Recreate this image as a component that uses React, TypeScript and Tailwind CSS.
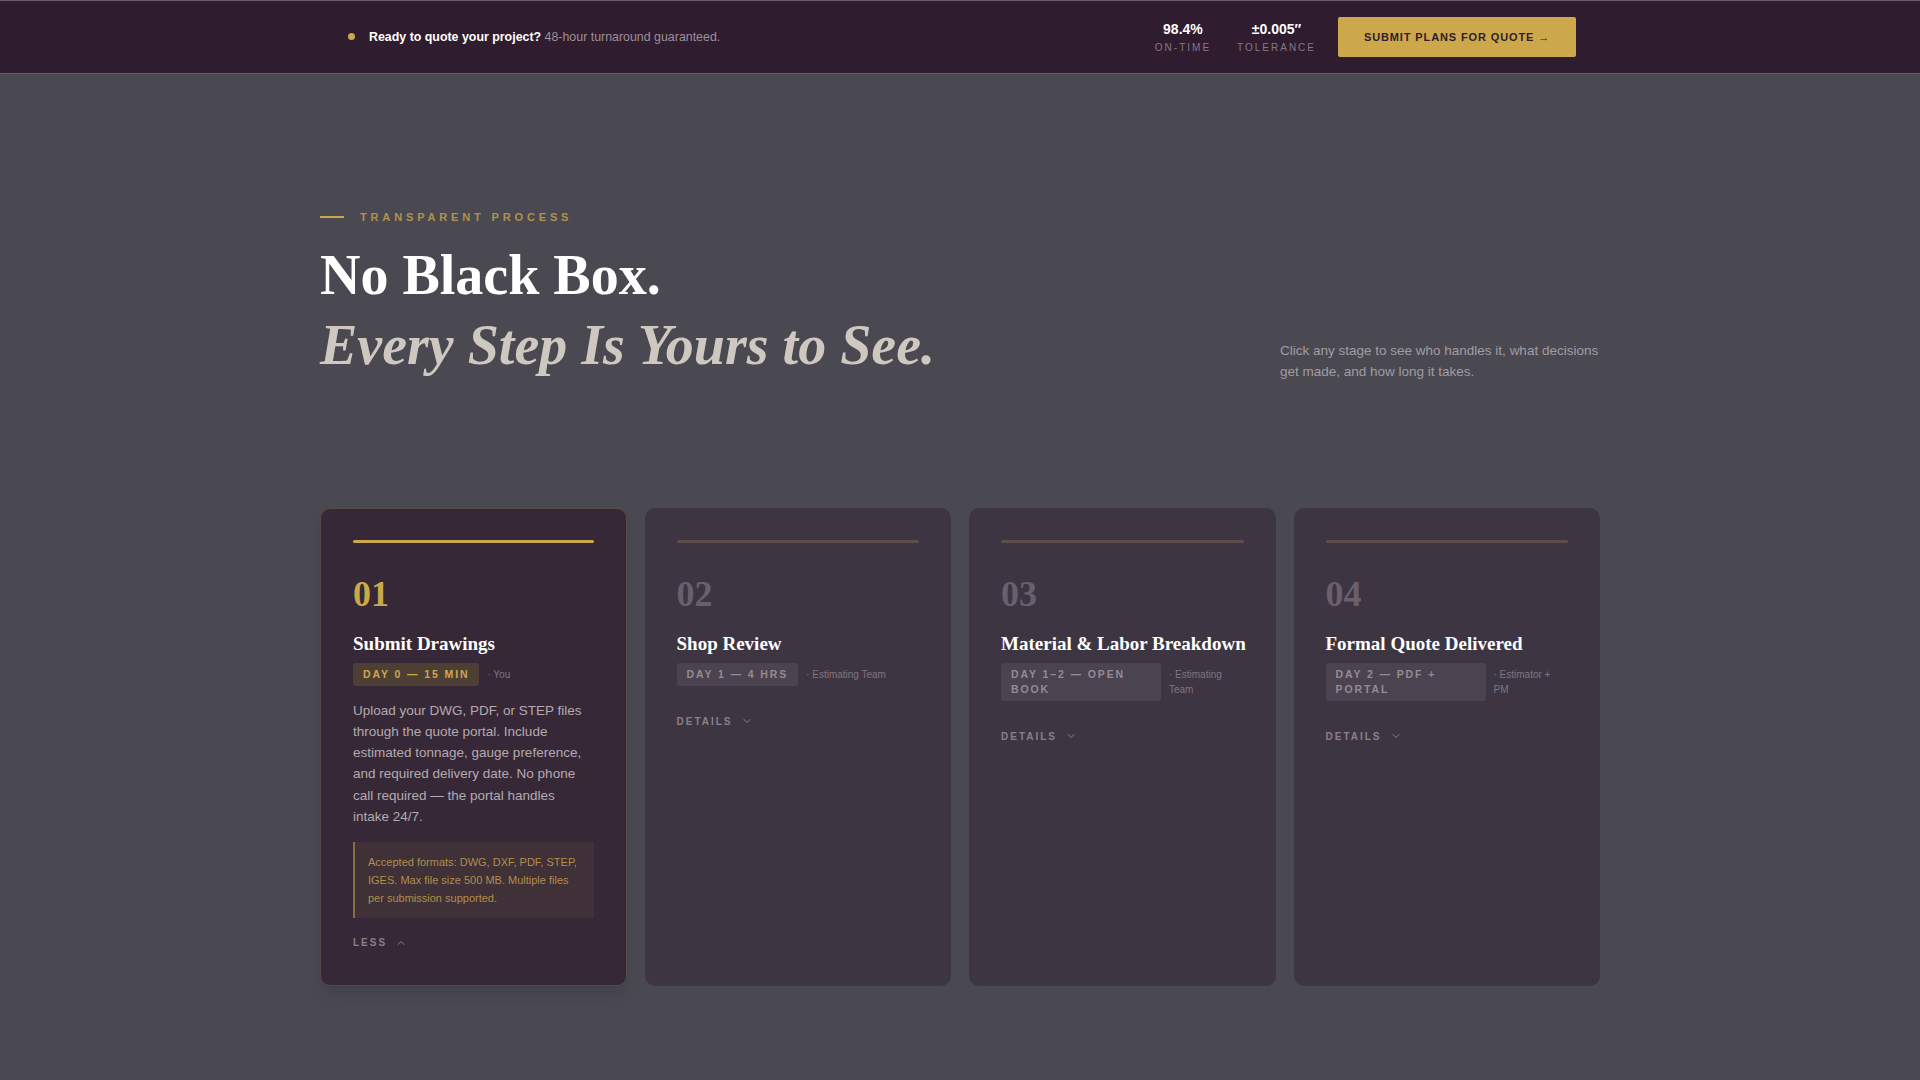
import { ChevronDown, ChevronUp } from 'lucide-react';

const SANS = { fontFamily: '"Liberation Sans", Arial, sans-serif' };
const SERIF = { fontFamily: '"Liberation Serif", "Times New Roman", serif' };

interface Stage {
  num: string;
  title: string;
  tag: string;
  who: string;
  active?: boolean;
}

const STAGES: Stage[] = [
  { num: '01', title: 'Submit Drawings', tag: 'DAY 0 — 15 MIN', who: 'You', active: true },
  { num: '02', title: 'Shop Review', tag: 'DAY 1 — 4 HRS', who: 'Estimating Team' },
  { num: '03', title: 'Material & Labor Breakdown', tag: 'DAY 1–2 — OPEN BOOK', who: 'Estimating Team' },
  { num: '04', title: 'Formal Quote Delivered', tag: 'DAY 2 — PDF + PORTAL', who: 'Estimator + PM' },
];

function StageCard({ s }: { s: Stage }) {
  return (
    <div
      className={
        s.active
          ? 'overflow-hidden rounded-[10px] border border-[#5a4a45] bg-[#362837] px-8 pt-[31px] pb-6 shadow-lg'
          : 'overflow-hidden rounded-[10px] bg-[#3e3543] px-8 pt-[32px] pb-6'
      }
    >
      <div className={s.active ? 'h-[3px] rounded bg-[#cca84a]' : 'h-[3px] rounded bg-[#5e4f4c]'} />
      <div
        className={`mt-[30px] text-[36px] font-bold leading-[42px] ${s.active ? 'text-[#cca84a]' : 'text-[#6a5f6d]'}`}
        style={SERIF}
      >
        {s.num}
      </div>
      <div className="mt-[16px] whitespace-nowrap text-[19px] font-bold leading-[26px] text-white" style={SERIF}>
        {s.title}
      </div>
      <div className="mt-[6px] flex items-start gap-2">
        <span
          className={`max-w-[160px] rounded-[3px] px-[10px] py-[4px] text-[10.5px] font-bold leading-[15px] tracking-[0.18em] ${
            s.active ? 'bg-[#4e3f35] text-[#cca84a]' : 'bg-[#4b4350] text-[#958b94]'
          }`}
          style={SANS}
        >
          {s.tag}
        </span>
        <span className="pt-[4px] text-[10px] leading-[15px] text-[#7f7580]" style={SANS}>
          · {s.who}
        </span>
      </div>
      {s.active ? (
        <>
          <p className="mt-[14px] text-[13.5px] leading-[21.3px] text-[#b4aab0]" style={SANS}>
            Upload your DWG, PDF, or STEP files through the quote portal. Include estimated tonnage,
            gauge preference, and required delivery date. No phone call required — the portal handles
            intake 24/7.
          </p>
          <div
            className="mt-[15px] border-l-2 border-[#8a6f3f] bg-[#3f3137] px-[13px] py-[11px] text-[11px] leading-[18px] text-[#b08e4c]"
            style={SANS}
          >
            Accepted formats: DWG, DXF, PDF, STEP, IGES. Max file size 500 MB. Multiple files per
            submission supported.
          </div>
          <div className="mt-[17px] flex items-center gap-2 text-[10px] font-bold tracking-[0.2em] text-[#8a8088]" style={SANS}>
            LESS <ChevronUp className="size-3" />
          </div>
        </>
      ) : (
        <div className="mt-[28px] flex items-center gap-2 text-[10px] font-bold tracking-[0.2em] text-[#8a8088]" style={SANS}>
          DETAILS <ChevronDown className="size-3" />
        </div>
      )}
    </div>
  );
}

export default function App() {
  return (
    <div className="min-h-[1080px] bg-[#4a4951]" style={SANS}>
      <header className="h-[74px] border-t border-b border-[#6b5c66] bg-[#2f1c2e]">
        <div className="mx-auto flex h-full max-w-[1280px] items-center justify-between px-6">
          <div className="flex items-center gap-[14px] pl-1 text-[12.4px]">
            <span className="size-[7px] rounded-full bg-[#cca84a]" />
            <span className="font-bold text-white">
              Ready to quote your project? <span className="font-normal text-[#9c8f9b]">48-hour turnaround guaranteed.</span>
            </span>
          </div>
          <div className="flex items-center gap-[10px]">
            <div className="flex flex-col items-center px-2">
              <span className="text-[14px] font-bold text-white">98.4%</span>
              <span className="text-[10px] tracking-[0.2em] text-[#857886]">ON-TIME</span>
            </div>
            <div className="flex flex-col items-center px-2">
              <span className="text-[14px] font-bold text-white">±0.005″</span>
              <span className="text-[10px] tracking-[0.2em] text-[#857886]">TOLERANCE</span>
            </div>
            <button className="ml-1 h-[40px] w-[238px] rounded-[2px] bg-[#cca84a] text-[11px] font-bold tracking-[0.08em] text-[#2f1c2e]">
              SUBMIT PLANS FOR QUOTE →
            </button>
          </div>
        </div>
      </header>

      <main className="mx-auto max-w-[1280px] pt-[135px]">
        <div className="flex items-center gap-4">
          <span className="h-[2px] w-[24px] bg-[#cca84a]" />
          <span className="text-[11px] font-bold tracking-[0.35em] text-[#b0924c]">TRANSPARENT PROCESS</span>
        </div>
        <div className="flex items-end justify-between">
          <h1 className="mt-[14px] text-[56px] leading-[70px]" style={SERIF}>
            <span className="block font-bold text-white">No Black Box.</span>
            <span className="block font-bold italic text-[#cfc8c0]">Every Step Is Yours to See.</span>
          </h1>
          <p className="-mb-[2px] mr-0 w-[320px] text-[13.5px] leading-[21px] text-[#a29ca3]">
            Click any stage to see who handles it, what decisions get made, and how long it takes.
          </p>
        </div>

        <div className="mt-[128px] grid h-[478px] grid-cols-4 gap-[18px]">
          {STAGES.map((s) => (
            <StageCard key={s.num} s={s} />
          ))}
        </div>
      </main>
    </div>
  );
}
